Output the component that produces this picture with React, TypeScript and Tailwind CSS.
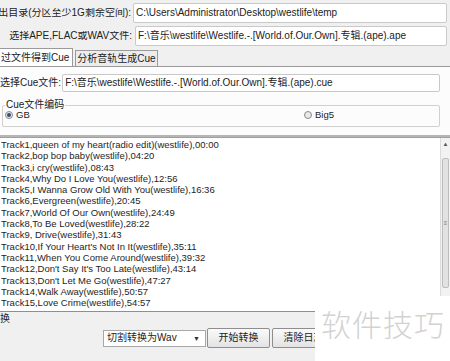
import React from "react";

const tracks = [
  "Track1,queen of my heart(radio edit)(westlife),00:00",
  "Track2,bop bop baby(westlife),04:20",
  "Track3,i cry(westlife),08:43",
  "Track4,Why Do I Love You(westlife),12:56",
  "Track5,I Wanna Grow Old With You(westlife),16:36",
  "Track6,Evergreen(westlife),20:45",
  "Track7,World Of Our Own(westlife),24:49",
  "Track8,To Be Loved(westlife),28:22",
  "Track9, Drive(westlife),31:43",
  "Track10,If Your Heart's Not In It(westlife),35:11",
  "Track11,When You Come Around(westlife),39:32",
  "Track12,Don't Say It's Too Late(westlife),43:14",
  "Track13,Don't Let Me Go(westlife),47:27",
  "Track14,Walk Away(westlife),50:57",
  "Track15,Love Crime(westlife),54:57",
];

function TextBox({ value, className = "" }: { value: string; className?: string }) {
  return (
    <div
      className={`flex items-center bg-white border border-[#c9c9c9] rounded-[2px] px-[2px] overflow-hidden whitespace-nowrap text-[#222] ${className}`}
    >
      {value}
    </div>
  );
}

function Radio({ checked, label }: { checked?: boolean; label: string }) {
  return (
    <div className="flex items-center gap-[3px]">
      <span className="w-[8px] h-[8px] rounded-full border border-[#8a8a8a] bg-[#e8e8e8] flex items-center justify-center">
        {checked && <span className="w-[4px] h-[4px] rounded-full bg-[#2d4f7a]" />}
      </span>
      <span>{label}</span>
    </div>
  );
}

export default function App(): React.ReactElement {
  return (
    <div
      className="relative w-[450px] h-[361px] overflow-hidden bg-[#f0f0f0] text-[10px] leading-none text-[#222]"
      style={{ fontFamily: '"Liberation Sans", "Noto Sans CJK SC", sans-serif' }}
    >
      {/* Output folder + source file */}
      <div className="pt-[3px] flex flex-col gap-[3px]">
        <div className="flex items-center h-[20px]">
          <div className="w-[133px] pr-[2px] flex justify-end overflow-hidden whitespace-nowrap">
            出目录(分区至少1G剩余空间):
          </div>
          <TextBox value="C:\Users\Administrator\Desktop\westlife\temp" className="flex-1 h-[20px] mr-[3px]" />
        </div>
        <div className="flex items-center h-[20px]">
          <div className="w-[135px] pr-[3px] flex justify-end overflow-hidden whitespace-nowrap">
            选择APE,FLAC或WAV文件:
          </div>
          <TextBox value="F:\音乐\westlife\Westlife.-.[World.of.Our.Own].专辑.(ape).ape" className="flex-1 h-[20px] mr-[3px]" />
        </div>
      </div>

      {/* Tabs */}
      <div className="mt-[2px] flex items-end h-[18px] gap-[2px]">
        <div className="h-[18px] w-[73px] bg-white border border-b-0 border-l-0 border-[#9a9a9a] flex items-center pl-[1px] whitespace-nowrap">
          过文件得到Cue
        </div>
        <div className="h-[16px] w-[83px] bg-[#ececec] border border-b-0 border-[#9a9a9a] flex items-center justify-center whitespace-nowrap">
          分析音轨生成Cue
        </div>
      </div>

      {/* Tab panel */}
      <div className="bg-[#fcfcfc] border-t border-[#9a9a9a] h-[71px] pt-[7px] pr-[10px] border-b-2 border-b-[#b5b5b5]">
        <div className="flex items-center h-[18px] gap-[1px]">
          <div className="shrink-0 whitespace-nowrap">选择Cue文件:</div>
          <TextBox value="F:\音乐\westlife\Westlife.-.[World.of.Our.Own].专辑.(ape).cue" className="flex-1 h-[18px]" />
        </div>
        <fieldset className="mt-[8px] ml-[2px] border border-[#d0d0d0] rounded-[2px] h-[27px] px-[2px]">
          <legend className="px-[1px]">Cue文件编码</legend>
          <div className="flex items-center h-[14px] -mt-[2px] text-[9.5px]">
            <div className="w-[299px]">
              <Radio checked label="GB" />
            </div>
            <Radio label="Big5" />
          </div>
        </fieldset>
      </div>

      {/* Log area */}
      <div className="flex bg-white border-t border-[#a0a0a0] h-[175px] border-b border-b-[#8f8f8f]">
        <div className="flex-1 pt-[1px] pl-[1px] text-[9.5px] leading-[11.3px] text-[#1e1e1e] overflow-hidden">
          {tracks.map((t) => (
            <div key={t} className="whitespace-nowrap">
              {t}
            </div>
          ))}
        </div>
        <div className="w-[10px] flex flex-col bg-[#f2f2f2] border-l border-[#dcdcdc]">
          <div className="h-[12px] flex items-center justify-center text-[6px] text-[#555]">▲</div>
          <div className="mx-[1px] h-[130px] mt-[8px] bg-[#e2e2e2] border border-[#bdbdbd] rounded-[2px] flex items-center justify-center text-[6px] text-[#777]">
            ≡
          </div>
        </div>
      </div>

      {/* Convert group */}
      <div className="h-[14px] flex items-center">换</div>
      <div className="mt-[2px] flex items-center h-[20px]">
        <div className="ml-[103px] w-[103px] h-[17px] bg-white border border-[#a8a8a8] flex items-center justify-between pl-[3px] pr-[5px]">
          <span>切割转换为Wav</span>
          <span className="text-[7px] text-[#333]">▼</span>
        </div>
        <button className="ml-[1px] w-[63px] h-[20px] bg-gradient-to-b from-[#fafafa] to-[#e3e3e3] border border-[#8e8e8e] rounded-[2px]">
          开始转换
        </button>
        <button className="ml-[2px] w-[63px] h-[20px] bg-gradient-to-b from-[#fafafa] to-[#e3e3e3] border border-[#8e8e8e] rounded-[2px] whitespace-nowrap overflow-hidden">
          清除日志
        </button>
      </div>

      {/* Watermark */}
      <div className="absolute right-0 top-[296px] w-[135px] h-[65px] bg-white flex items-start pt-[12px] pl-[6px]">
        <span
          className="text-[30px] leading-none font-light text-[#d2d2d2] tracking-[1px] whitespace-nowrap"
          style={{ fontFamily: '"Noto Sans CJK SC", sans-serif' }}
        >
          软件技巧
        </span>
      </div>
    </div>
  );
}
